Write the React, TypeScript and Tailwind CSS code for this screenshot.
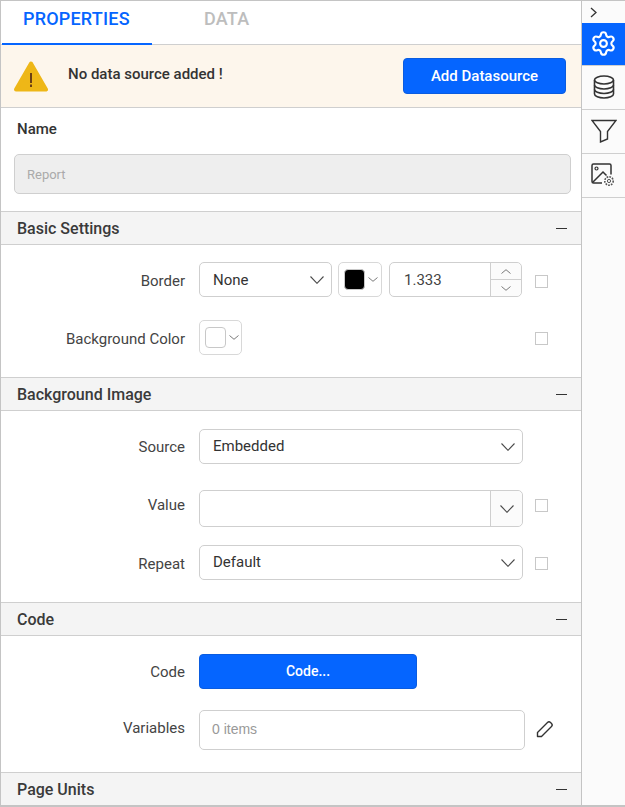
import React from 'react';
import { Settings } from 'lucide-react';

// thin chevron drawn to the exact pixel width seen in the panel
const Chev: React.FC<{ w: number; h: number; up?: boolean; className?: string }> = ({ w, h, up, className }) => (
  <svg width={w} height={h} viewBox={`0 0 ${w} ${h}`} fill="none" className={`shrink-0 ${className ?? ''}`}>
    <path
      d={up ? `M0.5 ${h - 0.5} L${w / 2} 0.7 L${w - 0.5} ${h - 0.5}` : `M0.5 0.5 L${w / 2} ${h - 0.7} L${w - 0.5} 0.5`}
      stroke={w > 10 ? '#4a4a4a' : '#6b6b6b'}
      strokeWidth={w > 10 ? 1.1 : 0.9}
    />
  </svg>
);

const Section: React.FC<{ title: string; children?: React.ReactNode }> = ({ title, children }) => (
  <div>
    <div className="h-[34px] bg-[#f4f4f4] border-y border-[#cfcfcf] flex items-center justify-between pl-[16px] pr-[14px] box-border">
      <span className="text-[16px] font-medium text-[#3a3a3a] mt-[2px]">{title}</span>
      <div className="w-[11px] h-[1px] bg-[#333]" />
    </div>
    {children}
  </div>
);

const Row: React.FC<{ label: string; className?: string; labelClass?: string; children: React.ReactNode }> = ({
  label, className, labelClass, children,
}) => (
  <div className={`flex ${className ?? ''}`}>
    <div className={`w-[184px] shrink-0 text-right text-[15px] leading-[20px] text-[#444] ${labelClass ?? ''}`}>{label}</div>
    <div className="ml-[14px] flex">{children}</div>
  </div>
);

const Select: React.FC<{ value: string; w: string; textClass?: string }> = ({ value, w, textClass }) => (
  <div className={`${w} h-[35px] border border-[#cfcfcf] rounded-[5px] flex items-center justify-between pl-[13px] pr-[7px] text-[15px] text-[#333] box-border`}>
    <span className={textClass ?? 'mb-[1px]'}>{value}</span>
    <Chev w={14} h={8} />
  </div>
);

const Check: React.FC<{ className?: string }> = ({ className }) => (
  <div className={`w-[13px] h-[13px] border border-[#c8c8c8] ${className ?? ''}`} />
);

const Swatch: React.FC<{ color: string; w: string }> = ({ color, w }) => (
  <div className={`${w} h-[35px] border border-[#d8d8d8] rounded-[5px] flex items-center pl-[5px] box-border`}>
    <div className={`w-[21px] h-[21px] rounded-[4px] border border-[#c8c8c8] ${color}`} />
    <Chev w={10} h={5} className="ml-[3px]" />
  </div>
);

export default function App() {
  return (
    <div className="w-[625px] h-[807px] flex bg-white border-t border-l border-b-2 border-[#c4c4c4] box-border overflow-hidden font-['Roboto',sans-serif]">
      <div className="w-[580px] shrink-0">
        {/* tabs */}
        <div className="h-[44px] border-b border-[#cfcfcf] flex box-border">
          <div className="w-[150px] ml-[1px] h-[44px] border-b-2 border-[#0565ff] text-[#0565ff] text-[18px] tracking-[0.2px] font-medium pl-[21px] pt-[4px] box-border">PROPERTIES</div>
          <div className="ml-[52px] text-[#bdbdbd] text-[18px] tracking-[0.2px] font-medium pt-[4px]">DATA</div>
        </div>

        {/* banner */}
        <div className="h-[63px] bg-[#fdf6ec] border-b border-[#cfcfcf] flex items-center pl-[13px] pr-[15px] box-border">
          <svg width="34" height="31" viewBox="0 0 34 31" className="shrink-0 mb-[-1px]">
            <path d="M17 2.5 L32 28.5 H2 Z" fill="#eeb717" stroke="#eeb717" strokeWidth="4" strokeLinejoin="round" />
            <rect x="16" y="12" width="2" height="10" fill="#6b3f14" />
            <rect x="16" y="23.5" width="2" height="2.5" fill="#6b3f14" />
          </svg>
          <span className="ml-[20px] text-[15px] font-medium text-[#333] mb-[3px]">No data source added !</span>
          <button className="ml-auto w-[163px] h-[36px] bg-[#0565ff] border border-[#0a5ce0] rounded-[4px] text-white text-[15px] font-medium">Add Datasource</button>
        </div>

        {/* name */}
        <div className="h-[103px] box-border pt-[12px]">
          <div className="pl-[16px] text-[15px] font-medium text-[#333] leading-[18px]">Name</div>
          <div className="mt-[16px] ml-[13px] w-[557px] h-[40px] bg-[#eeeeee] border border-[#cfcfcf] rounded-[5px] flex items-center pl-[12px] pt-[1px] text-[13px] text-[#aaa] box-border">Report</div>
        </div>

        <Section title="Basic Settings">
          <div className="pt-[17px] pb-[22px]">
            <Row label="Border" labelClass="pt-[9px]">
              <Select value="None" w="w-[133px]" textClass="mt-[1px]" />
              <div className="ml-[6px]"><Swatch color="bg-black" w="w-[44px]" /></div>
              <div className="ml-[7px] w-[133px] h-[35px] border border-[#cfcfcf] rounded-[5px] flex items-center box-border">
                <span className="pl-[14px] pt-[1px] text-[15px] text-[#444] flex-1">1.333</span>
                <div className="w-[31px] h-full border-l border-[#cfcfcf] bg-[#fbfbfb] rounded-r-[5px] flex flex-col">
                  <div className="flex-1 border-b border-[#cfcfcf] flex items-center justify-center"><Chev up w={10} h={5} /></div>
                  <div className="flex-1 flex items-center justify-center"><Chev w={10} h={5} /></div>
                </div>
              </div>
              <Check className="ml-[13px] mt-[13px]" />
            </Row>
            <Row label="Background Color" labelClass="pt-[9px]" className="mt-[23px]">
              <Swatch color="bg-white" w="w-[43px]" />
              <Check className="ml-[293px] mt-[12px]" />
            </Row>
          </div>
        </Section>

        <Section title="Background Image">
          <div className="pt-[18px] pb-[22px]">
            <Row label="Source" labelClass="pt-[8px]">
              <Select value="Embedded" w="w-[324px]" />
            </Row>
            <Row label="Value" labelClass="pt-[5px]" className="mt-[26px]">
              <div className="w-[324px] h-[37px] border border-[#cfcfcf] rounded-[5px] flex justify-end box-border">
                <div className="w-[32px] h-full border-l border-[#cfcfcf] bg-[#fbfbfb] rounded-r-[5px] flex items-center justify-center">
                  <Chev w={14} h={8} />
                </div>
              </div>
              <Check className="ml-[12px] mt-[9px]" />
            </Row>
            <Row label="Repeat" labelClass="pt-[9px]" className="mt-[18px]">
              <Select value="Default" w="w-[324px]" />
              <Check className="ml-[12px] mt-[12px]" />
            </Row>
          </div>
        </Section>

        <Section title="Code">
          <div className="pt-[18px] pb-[22px]">
            <Row label="Code" labelClass="pt-[8px]">
              <button className="w-[218px] h-[35px] bg-[#0565ff] border border-[#0a5ce0] rounded-[4px] text-white text-[14px] font-medium">Code...</button>
            </Row>
            <Row label="Variables" labelClass="pt-[8px]" className="mt-[21px]">
              <div className="w-[326px] h-[40px] border border-[#cfcfcf] rounded-[5px] flex items-center pl-[12px] pb-[1px] text-[14px] text-[#999] box-border font-['Liberation_Sans',sans-serif]">0 items</div>
              <svg width="18" height="18" viewBox="0 0 18 18" fill="none" className="ml-[11px] mt-[10px]">
                <path d="M1.5 16.5 L1.5 12.5 L11.5 2.5 Q13 1 14.5 2.5 L15.5 3.5 Q17 5 15.5 6.5 L5.5 16.5 Z" stroke="#333" strokeWidth="1.4" strokeLinejoin="round" />
              </svg>
            </Row>
          </div>
        </Section>

        <Section title="Page Units" />
      </div>

      {/* side rail */}
      <div className="w-[44px] border-l border-[#c4c4c4] bg-[#fbfbfb] box-border">
        <div className="h-[22px] flex items-center pl-[8px]">
          <svg width="7" height="11" viewBox="0 0 7 11" fill="none"><path d="M1 1 L6 5.5 L1 10" stroke="#333" strokeWidth="1.3" /></svg>
        </div>
        <div className="h-[43px] bg-[#0565ff] border-b border-[#cfcfcf] flex items-center justify-center box-border">
          <Settings size={27} strokeWidth={1.9} className="text-white mr-[1px] mb-[1px]" />
        </div>
        <div className="h-[44px] border-b border-[#cfcfcf] flex items-center justify-center box-border">
          <svg width="22" height="24" viewBox="0 0 22 24" fill="none" stroke="#333" strokeWidth="1.6" className="mb-[2px]">
            <ellipse cx="11" cy="5" rx="9.5" ry="4" />
            <path d="M1.5 5 V19 C1.5 21.2 5.8 23 11 23 C16.2 23 20.5 21.2 20.5 19 V5" />
            <path d="M1.5 10 C1.5 12.2 5.8 14 11 14 C16.2 14 20.5 12.2 20.5 10" />
            <path d="M1.5 14.5 C1.5 16.7 5.8 18.5 11 18.5 C16.2 18.5 20.5 16.7 20.5 14.5" />
          </svg>
        </div>
        <div className="h-[44px] border-b border-[#cfcfcf] flex items-center justify-center box-border">
          <svg width="26" height="24" viewBox="0 0 26 24" fill="none" stroke="#333" strokeWidth="1.4" className="mb-[1px]">
            <path d="M1 1.5 H25 L16.5 12.5 V20 L9.5 23 V12.5 Z" strokeLinejoin="miter" />
          </svg>
        </div>
        <div className="h-[44px] border-b border-[#cfcfcf] flex items-center justify-center box-border">
          <svg width="24" height="24" viewBox="0 0 24 24" fill="none" className="mr-[1px] mb-[1px]">
            <path d="M11 20 H2.5 A1.5 1.5 0 0 1 1 18.5 V2.5 A1.5 1.5 0 0 1 2.5 1 H18.5 A1.5 1.5 0 0 1 20 2.5 V11.5" stroke="#333" strokeWidth="1.5" />
            <circle cx="5.5" cy="5.5" r="1.5" stroke="#333" strokeWidth="1.2" />
            <path d="M1.5 19.5 L12 9 L15.5 12.5" stroke="#333" strokeWidth="1.5" />
            <circle cx="18" cy="18" r="1.6" stroke="#555" strokeWidth="1" />
            <circle cx="18" cy="18" r="4.2" stroke="#555" strokeWidth="1.6" strokeDasharray="1.7 1.1" />
          </svg>
        </div>
      </div>
    </div>
  );
}
